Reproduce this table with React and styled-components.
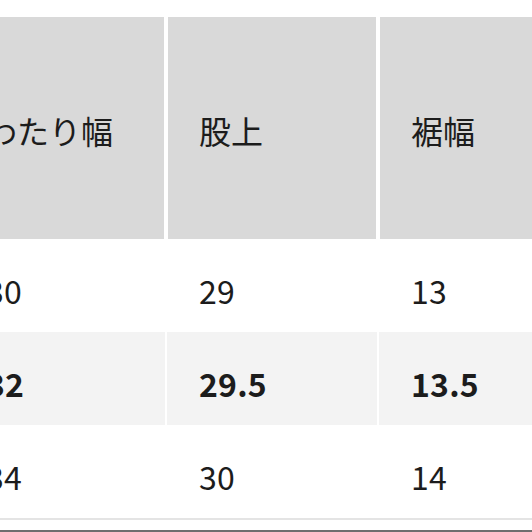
import React from 'react';
import styled, { createGlobalStyle } from 'styled-components';

const GlobalStyle = createGlobalStyle`
  html, body {
    margin: 0;
    padding: 0;
    background: #ffffff;
    overflow: hidden;
  }
  body {
    font-family: "Noto Sans CJK JP", "Noto Sans", sans-serif;
    color: #1c1c1c;
  }
`;

const Page = styled.div`
  width: 532px;
  height: 532px;
  padding-top: 17px;
  box-sizing: border-box;
  overflow: hidden;
  display: flex;
  flex-direction: column;
`;

// the table is wider than the crop, so its first column starts off-screen
const Table = styled.div`
  margin-left: -46px;
  display: flex;
  flex-direction: column;
  border-bottom: 2px solid #e4e4e4;
`;

const Row = styled.div`
  display: grid;
  grid-template-columns: ${(p) => (p.$head ? '210px 208px 208px' : '211px 210px 208px')};
  column-gap: ${(p) => (p.$head ? '4px' : '2px')};
  height: ${(p) => (p.$head ? '222px' : '93px')};
`;

const Cell = styled.div`
  display: flex;
  align-items: center;
  padding: ${(p) => (p.$head ? '4px 0 0 31px' : '8px 0 0 32px')};
  box-sizing: border-box;
  background: ${(p) => (p.$head ? '#d9d9d9' : p.$highlight ? '#f3f3f3' : '#ffffff')};
  font-size: 32px;
  font-weight: ${(p) => (p.$highlight ? 700 : 400)};
  line-height: 1;
  white-space: nowrap;
  letter-spacing: ${(p) => (p.$head ? '0' : '0.2px')};
`;

const Footer = styled.div`
  margin-top: 10px;
  border-top: 2px solid #6e6e6e;
`;

const header = ['わたり幅', '股上', '裾幅'];
const rows = [
  ['30', '29', '13'],
  ['32', '29.5', '13.5'],
  ['34', '30', '14'],
];

const App = () => (
  <>
    <GlobalStyle />
    <Page>
      <Table>
        <Row $head>
          {header.map((h) => (
            <Cell $head key={h}>
              {h}
            </Cell>
          ))}
        </Row>
        {rows.map((r, i) => (
          <Row key={i}>
            {r.map((v, j) => (
              <Cell key={j} $highlight={i === 1}>
                {v}
              </Cell>
            ))}
          </Row>
        ))}
      </Table>
      <Footer />
    </Page>
  </>
);

export default App;
